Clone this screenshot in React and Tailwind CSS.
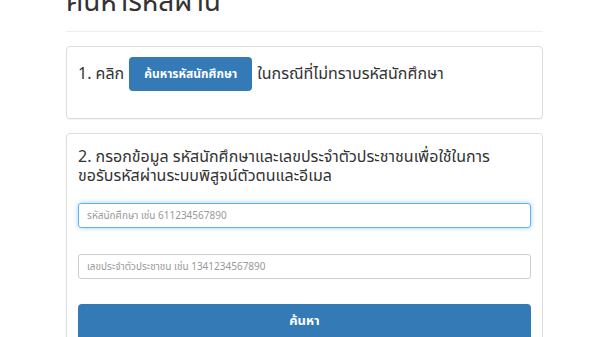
import React from "react";

const App = () => {
  return (
    <div className="bg-white w-[600px] h-[337px] overflow-hidden text-[#333] font-['Noto_Sans_Thai','DejaVu_Sans',sans-serif]">
      <div className="w-[477px] ml-[66px] -mt-[14px]">
        {/* Title */}
        <h3 className="text-[28px] leading-[34px] font-normal text-[#333] pb-[11px] border-b border-[#eee] mt-0 mb-[14px]">
          ค้นหารหัสผ่าน
        </h3>

        {/* Panel 1 */}
        <div className="border border-[#ddd] rounded-[4px] shadow-[0_1px_1px_rgba(0,0,0,0.05)] px-[11px] pt-[10px] pb-[27px] mb-[14px]">
          <div className="flex items-center text-[16px]">
            <span>1. คลิก</span>
            <button className="mx-[5px] bg-[#337ab7] text-white font-bold text-[12px] rounded-[4px] px-[15px] h-[34px]">
              ค้นหารหัสนักศึกษา
            </button>
            <span>ในกรณีที่ไม่ทราบรหัสนักศึกษา</span>
          </div>
        </div>

        {/* Panel 2 */}
        <div className="border border-[#ddd] rounded-[4px] shadow-[0_1px_1px_rgba(0,0,0,0.05)] px-[11px] pt-[14px] pb-[15px]">
          <p className="text-[16px] leading-[19px] mb-[17px]">
            2. กรอกข้อมูล รหัสนักศึกษาและเลขประจำตัวประชาชนเพื่อใช้ในการ
            <br />
            ขอรับรหัสผ่านระบบพิสูจน์ตัวตนและอีเมล
          </p>
          <input
            type="text"
            placeholder="รหัสนักศึกษา เช่น 611234567890"
            className="block w-full h-[25px] px-[8px] text-[10px] border border-[#66afe9] rounded-[3px] shadow-[0_0_5px_rgba(102,175,233,0.6)] outline-none placeholder:text-[#999]"
          />
          <input
            type="text"
            placeholder="เลขประจำตัวประชาชน เช่น 1341234567890"
            className="block w-full h-[25px] px-[8px] text-[10px] border border-[#ccc] rounded-[3px] mt-[26px] outline-none placeholder:text-[#999]"
          />
          <button className="block w-full h-[36px] mt-[25px] bg-[#337ab7] text-white font-bold text-[13px] rounded-[4px]">
            ค้นหา
          </button>
        </div>
      </div>
    </div>
  );
};

export default App;
